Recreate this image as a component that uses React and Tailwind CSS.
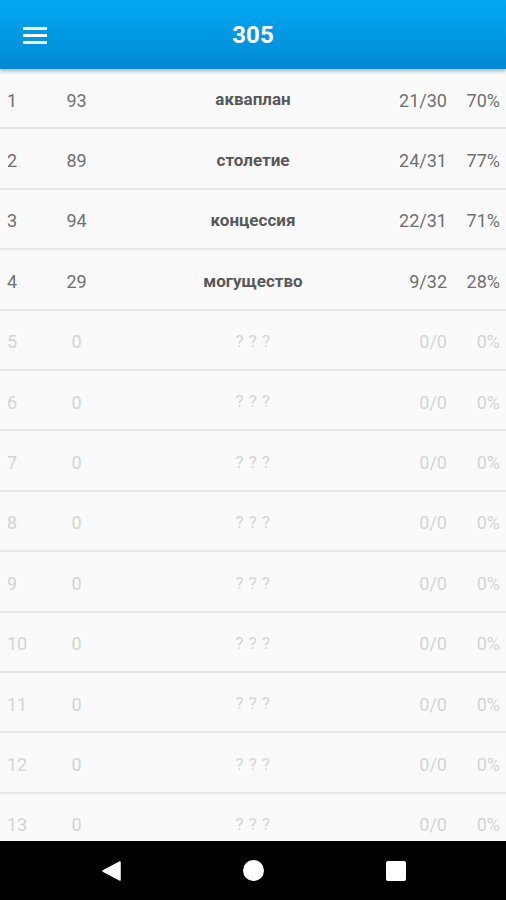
import React from "react";

const rows = [
  { n: 1, score: 93, word: "акваплан", frac: "21/30", pct: "70%" },
  { n: 2, score: 89, word: "столетие", frac: "24/31", pct: "77%" },
  { n: 3, score: 94, word: "концессия", frac: "22/31", pct: "71%" },
  { n: 4, score: 29, word: "могущество", frac: "9/32", pct: "28%" },
];

for (let i = 5; i <= 13; i++) {
  rows.push({ n: i, score: 0, word: "? ? ?", frac: "0/0", pct: "0%", empty: true });
}

const Row = ({ row }) => {
  const tone = row.empty ? "text-[#d4d4d4]" : "text-[#707070]";
  return (
    <div className={`flex items-center h-[60.4px] pt-[4px] shrink-0 border-b-2 border-[#e6e6e6] text-[18px] ${tone}`}>
      <div className="w-[150px] flex items-center">
        <span className="w-[66px] pl-[7px]">{row.n}</span>
        <span className="w-[21px] text-center">{row.score}</span>
      </div>
      <div className={`flex-1 text-center ${row.empty ? "text-[17px] tracking-[0.5px]" : "font-bold text-[17px] text-[#585858]"}`}>
        {row.word}
      </div>
      <div className="w-[150px] flex items-center">
        <span className="w-[91px] text-right">{row.frac}</span>
        <span className="w-[53px] text-right">{row.pct}</span>
      </div>
    </div>
  );
};

export default function App() {
  return (
    <div
      className="w-[506px] h-[900px] flex flex-col bg-[#fafafa] overflow-hidden"
      style={{ fontFamily: "Roboto, 'Liberation Sans', sans-serif" }}
    >
      {/* toolbar */}
      <div className="relative z-10 h-[69px] shrink-0 flex items-center bg-gradient-to-b from-[#03a9f4] to-[#0289d2] shadow-[0_2px_4px_rgba(0,0,0,0.3)]">
        <div className="absolute left-[23px] top-[27px] flex flex-col gap-[4px]">
          <div className="w-[24px] h-[3px] bg-white" />
          <div className="w-[24px] h-[3px] bg-white" />
          <div className="w-[24px] h-[3px] bg-white" />
        </div>
        <div className="flex-1 text-center text-white font-bold text-[24px]">305</div>
      </div>

      {/* list */}
      <div className="flex-1 flex flex-col overflow-hidden">
        {rows.map((r) => (
          <Row key={r.n} row={r} />
        ))}
      </div>

      {/* android nav bar */}
      <div className="h-[59px] shrink-0 bg-black flex items-center">
        <div className="w-[506px] flex items-center justify-between pl-[102px] pr-[100px]">
          <svg width="19" height="20" viewBox="0 0 19 20">
            <path d="M18 1 L18 19 L1 10 Z" fill="white" stroke="white" strokeWidth="1.5" strokeLinejoin="round" />
          </svg>
          <div className="w-[21px] h-[21px] rounded-full bg-white" />
          <div className="w-[20px] h-[20px] rounded-[2px] bg-white" />
        </div>
      </div>
    </div>
  );
}
